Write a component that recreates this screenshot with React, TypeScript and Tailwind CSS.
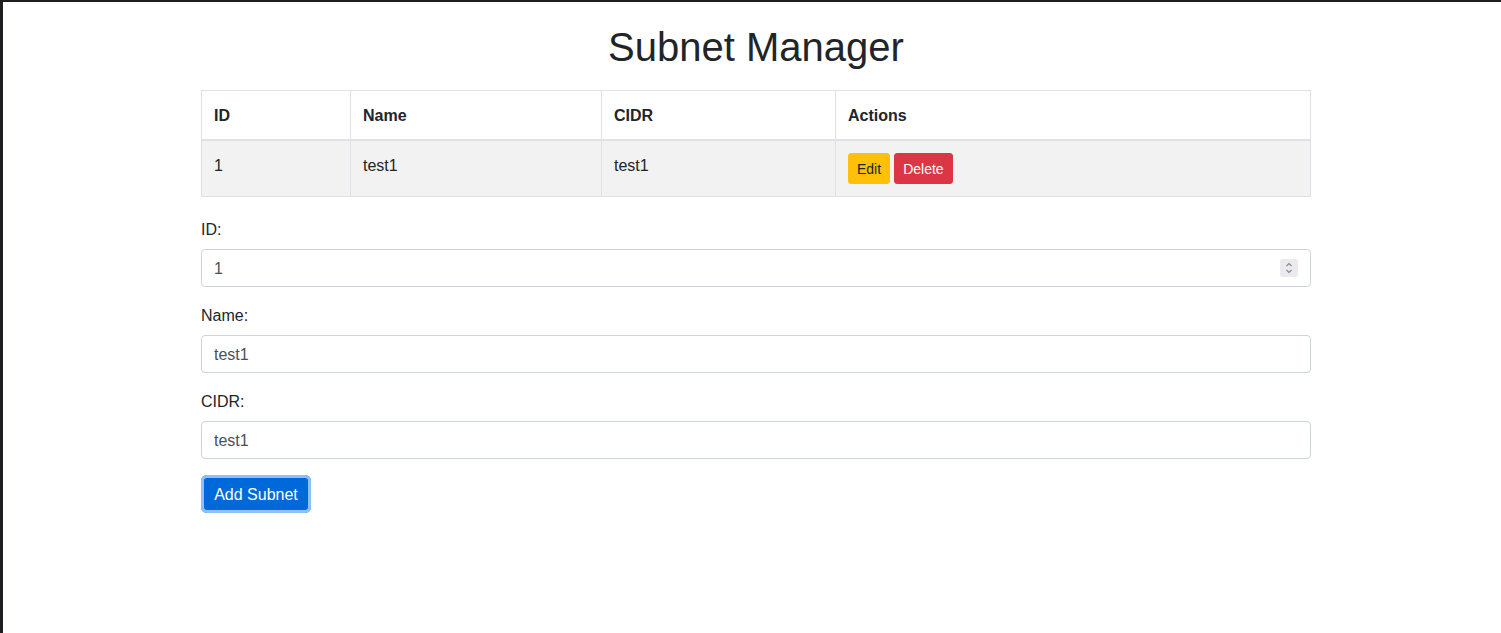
import { useState } from "react";

interface Subnet {
  id: number;
  name: string;
  cidr: string;
}

const Spinner = () => (
  <div className="absolute right-[13px] top-[10px] flex h-[18px] w-[18px] items-center justify-center rounded-[2px] bg-[#ebebef]">
    <svg width="10" height="14" viewBox="0 0 10 14" fill="none" stroke="#85858a" strokeWidth="1.1">
      <path d="M2.5 5 L5 2.5 L7.5 5" />
      <path d="M2.5 9 L5 11.5 L7.5 9" />
    </svg>
  </div>
);

export default function App() {
  const [subnets] = useState<Subnet[]>([{ id: 1, name: "test1", cidr: "test1" }]);
  const [id, setId] = useState("1");
  const [name, setName] = useState("test1");
  const [cidr, setCidr] = useState("test1");

  const inputClass =
    "h-[38px] w-full rounded-[4px] border border-[#ced4da] bg-white px-3 pt-[2px] text-base leading-6 text-[#495057] outline-none";

  return (
    <div
      className="h-[633px] border-l-[3px] border-t-2 border-[#1f1f22] bg-white text-[#212529]"
      style={{ fontFamily: '"Liberation Sans", Arial, sans-serif' }}
    >
      <div className="ml-[198px] w-[1110px] pt-[21px]">
        <h1 className="mb-[19px] text-center text-[40px] font-normal leading-[48px]">Subnet Manager</h1>

        {/* tabla */}
        <table className="w-full table-fixed border-collapse border border-[#dee2e6] text-base leading-6">
          <colgroup>
            <col className="w-[149px]" />
            <col className="w-[251px]" />
            <col className="w-[234px]" />
            <col />
          </colgroup>
          <thead>
            <tr>
              <th className="border border-b-2 border-[#dee2e6] px-3 pb-[11px] pt-[13px] text-left font-bold">ID</th>
              <th className="border border-b-2 border-[#dee2e6] px-3 pb-[11px] pt-[13px] text-left font-bold">Name</th>
              <th className="border border-b-2 border-[#dee2e6] px-3 pb-[11px] pt-[13px] text-left font-bold">CIDR</th>
              <th className="border border-b-2 border-[#dee2e6] px-3 pb-[11px] pt-[13px] text-left font-bold">Actions</th>
            </tr>
          </thead>
          <tbody>
            {subnets.map((s) => (
              <tr key={s.id} className="bg-[#f2f2f2]">
                <td className="border border-[#dee2e6] px-3 pb-[11px] pt-[13px] align-top">{s.id}</td>
                <td className="border border-[#dee2e6] px-3 pb-[11px] pt-[13px] align-top">{s.name}</td>
                <td className="border border-[#dee2e6] px-3 pb-[11px] pt-[13px] align-top">{s.cidr}</td>
                <td className="border border-[#dee2e6] p-3 align-top">
                  <div className="flex gap-1">
                    <button className="rounded-[3px] border border-[#ffc107] bg-[#ffc107] px-2 pb-[3px] pt-[5px] text-sm leading-[21px] text-[#212529]">
                      Edit
                    </button>
                    <button className="rounded-[3px] border border-[#dc3545] bg-[#dc3545] px-2 pb-[3px] pt-[5px] text-sm leading-[21px] text-white">
                      Delete
                    </button>
                  </div>
                </td>
              </tr>
            ))}
          </tbody>
        </table>

        {/* formulario */}
        <form className="mt-5 flex flex-col" onSubmit={(e) => e.preventDefault()}>
          <div className="mb-4 flex flex-col">
            <label className="mb-[7px] pt-px text-base leading-6">ID:</label>
            <div className="relative">
              <input className={inputClass} value={id} onChange={(e) => setId(e.target.value)} />
              <Spinner />
            </div>
          </div>
          <div className="mb-4 flex flex-col">
            <label className="mb-[7px] pt-px text-base leading-6">Name:</label>
            <input className={inputClass} value={name} onChange={(e) => setName(e.target.value)} />
          </div>
          <div className="mb-4 flex flex-col">
            <label className="mb-[7px] pt-px text-base leading-6">CIDR:</label>
            <input className={inputClass} value={cidr} onChange={(e) => setCidr(e.target.value)} />
          </div>
          <div>
            <button
              type="submit"
              className="h-[38px] w-[110px] rounded-[6px] bg-[#0069d9] pt-[2px] text-base leading-6 text-white ring-[3px] ring-inset ring-[#8fc0f6]"
            >
              Add Subnet
            </button>
          </div>
        </form>
      </div>
    </div>
  );
}
